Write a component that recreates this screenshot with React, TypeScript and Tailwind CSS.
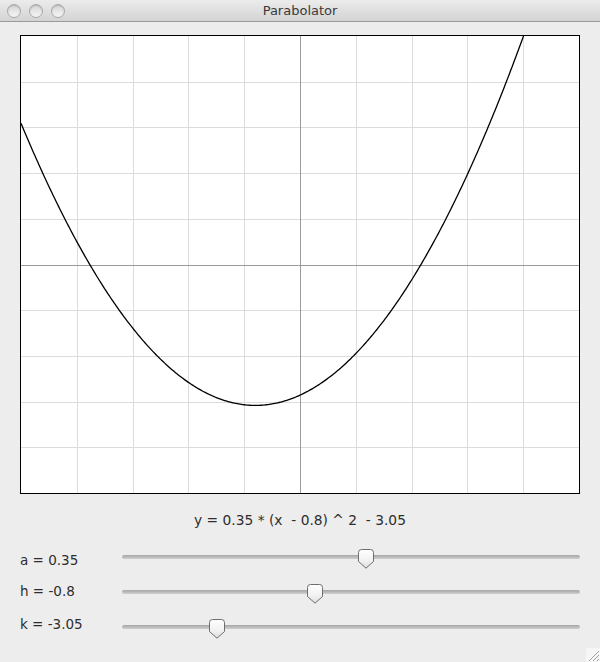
import React from "react";

const W = 558;
const H = 457;
const sx = W / 10;
const sy = H / 10;
const toX = (x: number) => W / 2 + x * sx;
const toY = (y: number) => H / 2 - y * sy;

function Graph() {
  const a = 0.35, h = -0.8, k = -3.05;
  const pts: string[] = [];
  for (let i = 0; i <= 400; i++) {
    const x = -5 + (10 * i) / 400;
    const y = a * (x - h) * (x - h) + k;
    pts.push(`${toX(x).toFixed(2)},${(toY(y) + 1.5).toFixed(2)}`);
  }
  const grid: React.ReactNode[] = [];
  for (let i = 1; i < 10; i++) {
    if (i === 5) continue;
    const gx = Math.round(i * sx) + 0.5;
    const gy = Math.round(i * sy) + 0.5;
    grid.push(<line key={"v" + i} x1={gx} y1={0} x2={gx} y2={H} stroke="#dcdcdc" strokeWidth={1} />);
    grid.push(<line key={"h" + i} x1={0} y1={gy} x2={W} y2={gy} stroke="#dcdcdc" strokeWidth={1} />);
  }
  return (
    <svg width={W} height={H} viewBox={`0 0 ${W} ${H}`} className="block">
      {grid}
      <line x1={Math.round(W / 2) + 0.5} y1={0} x2={Math.round(W / 2) + 0.5} y2={H} stroke="#9a9a9a" strokeWidth={1} />
      <line x1={0} y1={Math.round(H / 2) + 0.5} x2={W} y2={Math.round(H / 2) + 0.5} stroke="#9a9a9a" strokeWidth={1} />
      <polyline points={pts.join(" ")} fill="none" stroke="#000" strokeWidth={1.3} />
    </svg>
  );
}

function Thumb() {
  return (
    <svg width="16" height="20" viewBox="0 0 16 20">
      <defs>
        <linearGradient id="tg" x1="0" y1="0" x2="0" y2="1">
          <stop offset="0" stopColor="#ffffff" />
          <stop offset="0.6" stopColor="#f1f1f1" />
          <stop offset="1" stopColor="#dcdcdc" />
        </linearGradient>
      </defs>
      <path d="M3.5 0.5 H12.5 Q15.5 0.5 15.5 3.5 V12.5 L8 19.2 L0.5 12.5 V3.5 Q0.5 0.5 3.5 0.5 Z" fill="url(#tg)" stroke="#6e6e6e" strokeWidth="1" />
    </svg>
  );
}

function SliderRow({ label, thumbLeft, labelShift }: { label: string; thumbLeft: string; labelShift: string }) {
  return (
    <div className="flex items-center h-[35px]">
      <div className={`w-[102px] text-[13.5px] text-[#2e2e2e] ${labelShift}`}>{label}</div>
      <div className="relative flex-1 h-[35px] flex items-center">
        <div className="w-full h-[4px] rounded-full bg-gradient-to-b from-[#a6a6a6] to-[#cfcfcf]" />
        <div className={`absolute top-[10px] ${thumbLeft}`}>
          <Thumb />
        </div>
      </div>
    </div>
  );
}

export default function App() {
  return (
    <div
      className="w-[600px] h-[662px] bg-[#ededed] flex flex-col relative overflow-hidden"
      style={{ fontFamily: '"DejaVu Sans", "Liberation Sans", sans-serif' }}
    >
      <div className="h-[22px] shrink-0 bg-gradient-to-b from-[#ececec] to-[#d3d3d3] border-b border-[#9c9c9c] flex items-center relative">
        <div className="flex items-center gap-[8px] pl-[7px]">
          {[0, 1, 2].map((i) => (
            <div
              key={i}
              className="w-[14px] h-[14px] rounded-full border border-[#a8a8a8] bg-gradient-to-b from-[#d4d4d4] via-[#e6e6e6] to-[#f4f4f4] shadow-[inset_0_1px_1px_rgba(0,0,0,0.15)]"
            />
          ))}
        </div>
        <div className="absolute inset-0 flex items-center justify-center text-[13px] text-[#3a3a3a]">Parabolator</div>
      </div>
      <div className="pt-[13px] px-[20px] flex flex-col">
        <div className="w-[560px] h-[459px] border border-black bg-white">
          <Graph />
        </div>
        <div className="mt-[18px] h-[16px] leading-[16px] text-center text-[13.8px] text-[#2e2e2e] whitespace-pre">
          {"y = 0.35 * (x  - 0.8) ^ 2  - 3.05"}
        </div>
        <div className="mt-[11px] flex flex-col">
          <SliderRow label="a = 0.35" thumbLeft="left-[236px]" labelShift="pt-[7px]" />
          <SliderRow label="h = -0.8" thumbLeft="left-[185px]" labelShift="pb-[1px]" />
          <SliderRow label="k = -3.05" thumbLeft="left-[87px]" labelShift="pb-[5px]" />
        </div>
      </div>
      <div className="absolute right-0 bottom-0 w-[14px] h-[14px] bg-[#f6f6f6]">
        <svg width="14" height="14" viewBox="0 0 14 14">
          <line x1="3" y1="13" x2="13" y2="3" stroke="#8a8a8a" strokeWidth="0.8" />
          <line x1="7" y1="13" x2="13" y2="7" stroke="#8a8a8a" strokeWidth="0.8" />
          <line x1="11" y1="13" x2="13" y2="11" stroke="#8a8a8a" strokeWidth="0.8" />
        </svg>
      </div>
    </div>
  );
}
